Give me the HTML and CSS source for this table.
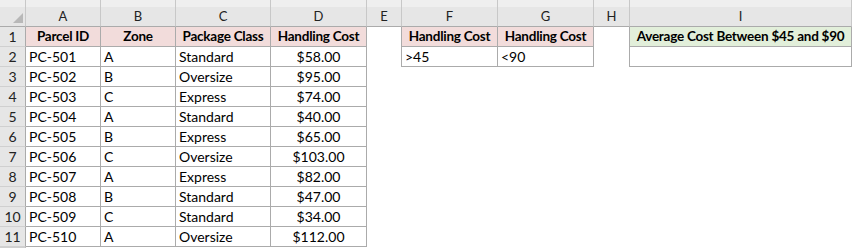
FILE: index.html
```html
<!DOCTYPE html>
<html>
<head>
<meta charset="utf-8">
<link rel="stylesheet" href="styles.css">
</head>
<body>
<div class="sheet">
  <div class="ch corner"><svg width="10" height="10" viewBox="0 0 10 10"><polygon points="10,0 10,10 0,10" fill="#b8b8b8"/></svg></div>
  <div class="ch">A</div><div class="ch">B</div><div class="ch">C</div><div class="ch">D</div><div class="ch">E</div><div class="ch">F</div><div class="ch">G</div><div class="ch">H</div><div class="ch">I</div>

  <div class="rh">1</div>
  <div class="c t h">Parcel ID</div><div class="c t h">Zone</div><div class="c t h">Package Class</div><div class="c t h">Handling Cost</div>
  <div class="c er"></div><div class="c t h">Handling Cost</div><div class="c t h">Handling Cost</div><div class="c er"></div><div class="c t g">Average Cost Between $45 and $90</div>

  <div class="rh">2</div>
  <div class="c t">PC-501</div><div class="c t">A</div><div class="c t">Standard</div><div class="c t ctr">$58.00</div>
  <div class="c er"></div><div class="c t">&gt;45</div><div class="c t">&lt;90</div><div class="c er"></div><div class="c t"></div>

  <div class="rh">3</div>
  <div class="c t">PC-502</div><div class="c t">B</div><div class="c t">Oversize</div><div class="c t ctr">$95.00</div>
  <div class="c"></div><div class="c"></div><div class="c"></div><div class="c"></div><div class="c"></div>

  <div class="rh">4</div>
  <div class="c t">PC-503</div><div class="c t">C</div><div class="c t">Express</div><div class="c t ctr">$74.00</div>
  <div class="c"></div><div class="c"></div><div class="c"></div><div class="c"></div><div class="c"></div>

  <div class="rh">5</div>
  <div class="c t">PC-504</div><div class="c t">A</div><div class="c t">Standard</div><div class="c t ctr">$40.00</div>
  <div class="c"></div><div class="c"></div><div class="c"></div><div class="c"></div><div class="c"></div>

  <div class="rh">6</div>
  <div class="c t">PC-505</div><div class="c t">B</div><div class="c t">Express</div><div class="c t ctr">$65.00</div>
  <div class="c"></div><div class="c"></div><div class="c"></div><div class="c"></div><div class="c"></div>

  <div class="rh">7</div>
  <div class="c t">PC-506</div><div class="c t">C</div><div class="c t">Oversize</div><div class="c t ctr">$103.00</div>
  <div class="c"></div><div class="c"></div><div class="c"></div><div class="c"></div><div class="c"></div>

  <div class="rh">8</div>
  <div class="c t">PC-507</div><div class="c t">A</div><div class="c t">Express</div><div class="c t ctr">$82.00</div>
  <div class="c"></div><div class="c"></div><div class="c"></div><div class="c"></div><div class="c"></div>

  <div class="rh">9</div>
  <div class="c t">PC-508</div><div class="c t">B</div><div class="c t">Standard</div><div class="c t ctr">$47.00</div>
  <div class="c"></div><div class="c"></div><div class="c"></div><div class="c"></div><div class="c"></div>

  <div class="rh">10</div>
  <div class="c t">PC-509</div><div class="c t">C</div><div class="c t">Standard</div><div class="c t ctr">$34.00</div>
  <div class="c"></div><div class="c"></div><div class="c"></div><div class="c"></div><div class="c"></div>

  <div class="rh">11</div>
  <div class="c t">PC-510</div><div class="c t">A</div><div class="c t">Oversize</div><div class="c t ctr">$112.00</div>
  <div class="c"></div><div class="c"></div><div class="c"></div><div class="c"></div><div class="c"></div>

  <div class="rh"></div>
  <div class="c"></div><div class="c"></div><div class="c"></div><div class="c"></div><div class="c"></div><div class="c"></div><div class="c"></div><div class="c"></div><div class="c"></div>
</div>
</body>
</html>
```
FILE: styles.css
```css
html, body {
  margin: 0;
  padding: 0;
  background: #ffffff;
  overflow: hidden;
  height: 248px;
}
.sheet {
  display: grid;
  grid-template-columns: 26px 75px 75px 95px 96px 35px 96px 96px 36px 222px;
  grid-template-rows: 27px repeat(11, 20px) 1px;
  font-family: Lato, "Liberation Sans", sans-serif;
  font-size: 14px;
  color: #000;
}
.sheet > div {
  box-sizing: border-box;
  white-space: nowrap;
  overflow: hidden;
  line-height: 19px;
}
.ch {
  background: linear-gradient(#efefef 0, #efefef 7px, #e6e6e6 7px);
  border-right: 1px solid #c8c8c8;
  border-bottom: 1px solid #ababab;
  padding-top: 7px;
  text-align: center;
  font-size: 13px;
  color: #222;
}
.corner {
  display: flex;
  align-items: flex-end;
  justify-content: flex-end;
  padding: 0 2px 3px 0;
}
.corner svg { display: block; }
.rh {
  background: #e6e6e6;
  border-right: 1px solid #ababab;
  border-bottom: 1px solid #d0d0d0;
  text-align: center;
  color: #222;
}
.c {
  padding: 0 3px;
}
.t {
  border-right: 1px solid #ababab;
  border-bottom: 1px solid #ababab;
}
.er {
  border-right: 1px solid #ababab;
}
.h {
  background: #f2dcdb;
  font-weight: bold;
  font-size: 13.5px;
  letter-spacing: -0.25px;
  text-align: center;
}
.g {
  background: #e2efda;
  font-weight: bold;
  font-size: 13.5px;
  letter-spacing: -0.25px;
  text-align: center;
}
.ctr {
  text-align: center;
}
```
